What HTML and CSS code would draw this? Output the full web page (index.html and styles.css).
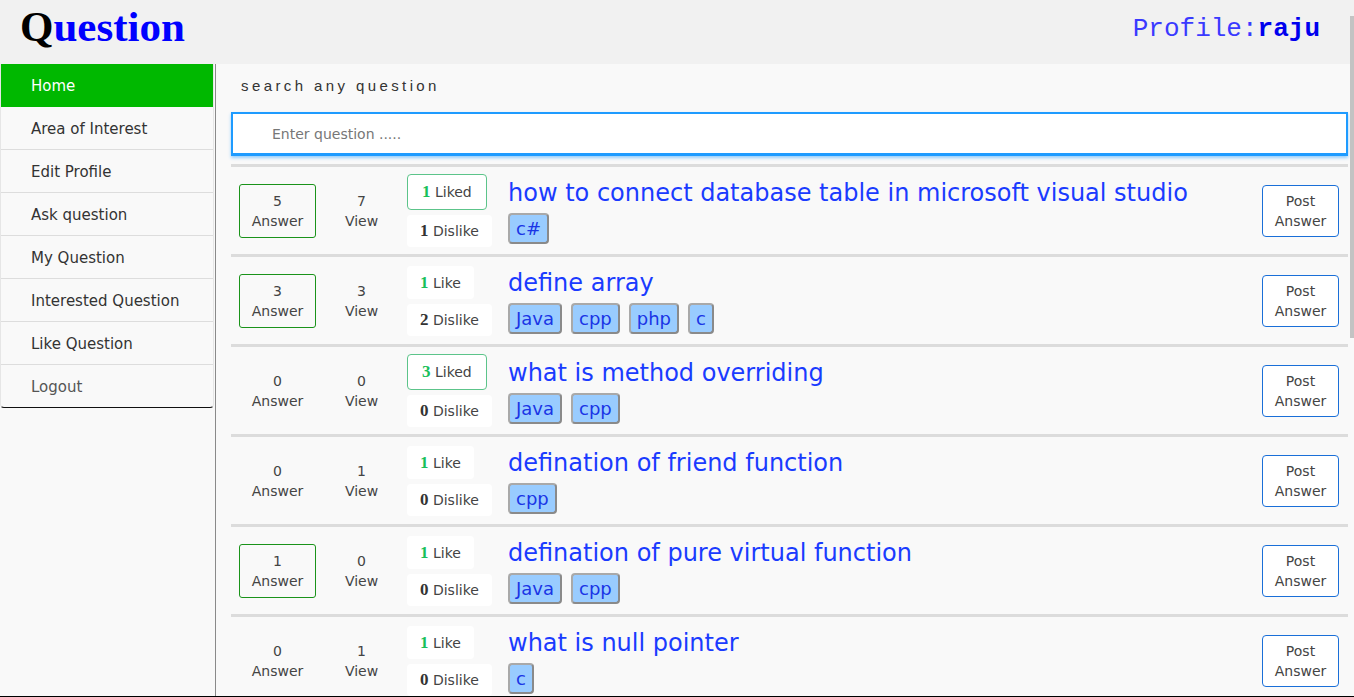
FILE: index.html
```html
<!DOCTYPE html>
<html>
<head>
<meta charset="utf-8">
<title>Question</title>
<link rel="stylesheet" href="styles.css">
</head>
<body>
<div class="page">
  <header class="topbar">
    <div class="logo"><span class="logo-q">Q</span>uestion</div>
    <div class="profile">Profile:<b>raju</b></div>
  </header>
  <div class="layout">
    <aside class="sidebar">
      <ul class="menu">
        <li class="active">Home</li>
        <li>Area of Interest</li>
        <li>Edit Profile</li>
        <li>Ask question</li>
        <li>My Question</li>
        <li>Interested Question</li>
        <li>Like Question</li>
        <li class="logout">Logout</li>
      </ul>
    </aside>
    <main class="content">
      <div class="search-label">search any question</div>
      <input class="search" type="text" placeholder="Enter question .....">
      <div class="list">
        <div class="row">
          <div class="answers has"><span>5</span><span>Answer</span></div>
          <div class="views"><span>7</span><span>View</span></div>
          <div class="votes">
            <div class="vote liked"><b class="num green">1</b> Liked</div>
            <div class="vote"><b class="num">1</b> Dislike</div>
          </div>
          <div class="q">
            <div class="title">how to connect database table in microsoft visual studio</div>
            <div class="tags"><span class="tag">c#</span></div>
          </div>
          <div class="post">Post<br>Answer</div>
        </div>
        <div class="row">
          <div class="answers has"><span>3</span><span>Answer</span></div>
          <div class="views"><span>3</span><span>View</span></div>
          <div class="votes">
            <div class="vote"><b class="num green">1</b> Like</div>
            <div class="vote"><b class="num">2</b> Dislike</div>
          </div>
          <div class="q">
            <div class="title">define array</div>
            <div class="tags"><span class="tag">Java</span><span class="tag">cpp</span><span class="tag">php</span><span class="tag">c</span></div>
          </div>
          <div class="post">Post<br>Answer</div>
        </div>
        <div class="row">
          <div class="answers"><span>0</span><span>Answer</span></div>
          <div class="views"><span>0</span><span>View</span></div>
          <div class="votes">
            <div class="vote liked"><b class="num green">3</b> Liked</div>
            <div class="vote"><b class="num">0</b> Dislike</div>
          </div>
          <div class="q">
            <div class="title">what is method overriding</div>
            <div class="tags"><span class="tag">Java</span><span class="tag">cpp</span></div>
          </div>
          <div class="post">Post<br>Answer</div>
        </div>
        <div class="row">
          <div class="answers"><span>0</span><span>Answer</span></div>
          <div class="views"><span>1</span><span>View</span></div>
          <div class="votes">
            <div class="vote"><b class="num green">1</b> Like</div>
            <div class="vote"><b class="num">0</b> Dislike</div>
          </div>
          <div class="q">
            <div class="title">defination of friend function</div>
            <div class="tags"><span class="tag">cpp</span></div>
          </div>
          <div class="post">Post<br>Answer</div>
        </div>
        <div class="row">
          <div class="answers has"><span>1</span><span>Answer</span></div>
          <div class="views"><span>0</span><span>View</span></div>
          <div class="votes">
            <div class="vote"><b class="num green">1</b> Like</div>
            <div class="vote"><b class="num">0</b> Dislike</div>
          </div>
          <div class="q">
            <div class="title">defination of pure virtual function</div>
            <div class="tags"><span class="tag">Java</span><span class="tag">cpp</span></div>
          </div>
          <div class="post">Post<br>Answer</div>
        </div>
        <div class="row">
          <div class="answers"><span>0</span><span>Answer</span></div>
          <div class="views"><span>1</span><span>View</span></div>
          <div class="votes">
            <div class="vote"><b class="num green">1</b> Like</div>
            <div class="vote"><b class="num">0</b> Dislike</div>
          </div>
          <div class="q">
            <div class="title">what is null pointer</div>
            <div class="tags"><span class="tag">c</span></div>
          </div>
          <div class="post">Post<br>Answer</div>
        </div>
      </div>
    </main>
  </div>
  <div class="scroll-thumb"></div>
</div>
</body>
</html>
```

FILE: styles.css
```css
* { box-sizing: border-box; }
html, body {
  margin: 0;
  padding: 0;
  height: 697px;
  overflow: hidden;
  background: #f9f9f9;
  font-family: "DejaVu Sans", Verdana, sans-serif;
}
.page {
  height: 697px;
  display: flex;
  flex-direction: column;
  border-bottom: 1px solid #000;
}
.topbar {
  height: 64px;
  flex: none;
  background: #f1f1f1;
  display: flex;
  align-items: flex-start;
  justify-content: space-between;
  padding: 0 34px 0 20px;
}
.logo {
  font-family: "Liberation Serif", "Times New Roman", serif;
  font-weight: bold;
  font-size: 43px;
  line-height: 54px;
  color: #0000ff;
}
.logo-q { color: #000; }
.profile {
  font-family: "Liberation Mono", "Courier New", monospace;
  font-size: 26px;
  line-height: 30px;
  margin-top: 14px;
  color: #3a3aff;
}
.profile b { color: #0000ee; }
.layout {
  flex: 1;
  display: flex;
  min-height: 0;
}
.sidebar {
  width: 216px;
  flex: none;
  border-right: 1px solid #8a8a8a;
  background: #f9f9f9;
  padding-right: 1px;
}
.menu {
  list-style: none;
  margin: 0;
  padding: 0;
  border-bottom: 1px solid #111;
  border-left: 1px solid #e6e6e6;
  border-right: 1px solid #e6e6e6;
  border-radius: 0 0 4px 4px;
  overflow: hidden;
}
.menu li {
  height: 43px;
  line-height: 44px;
  padding-left: 30px;
  font-size: 15px;
  color: #333;
  border-bottom: 1px solid #dddddd;
}
.menu li:last-child { border-bottom: none; height: 42px; }
.menu li.active {
  background: #00b800;
  color: #fff;
  border-bottom: none;
}
.menu li.logout { color: #555; }
.content {
  flex: 1;
  min-width: 0;
  background: #f9f9f9;
  padding: 13px 5px 0 15px;
  overflow: hidden;
}
.search-label {
  font-family: "Liberation Sans", Arial, sans-serif;
  font-size: 15px;
  line-height: 18px;
  letter-spacing: 3.4px;
  color: #333;
  padding-left: 10px;
}
.search {
  display: block;
  width: 1117px;
  height: 44px;
  margin-top: 17px;
  border: 2px solid #1e9bff;
  border-bottom-width: 3px;
  box-shadow: 0 2px 3px rgba(30, 155, 255, 0.45);
  background: #fff;
  padding: 0 0 0 39px;
  font-family: "DejaVu Sans", Verdana, sans-serif;
  font-size: 14px;
  color: #333;
  outline: none;
}
.search::placeholder { color: #777; }
.list {
  width: 1117px;
  margin-top: 8px;
}
.row {
  height: 90px;
  border-top: 3px solid #dcdcdc;
  display: flex;
  align-items: center;
  padding: 0 9px 0 8px;
  font-size: 14px;
  color: #444;
}
.answers, .views {
  width: 77px;
  flex: none;
  display: flex;
  flex-direction: column;
  align-items: center;
  justify-content: center;
  line-height: 20px;
}
.answers {
  height: 54px;
  border: 1px solid transparent;
  border-radius: 3px;
  margin-right: 7px;
}
.answers.has { border-color: #1a931a; }
.views { margin-right: 7px; }
.votes {
  width: 85px;
  flex: none;
  margin-right: 16px;
  display: flex;
  flex-direction: column;
  align-items: flex-start;
  gap: 5px;
}
.vote {
  height: 32px;
  line-height: 32px;
  padding: 0 13px;
  background: #fff;
  border-radius: 4px;
  white-space: nowrap;
}
.vote:first-child { height: 33px; line-height: 33px; }
.vote.liked {
  height: 36px;
  line-height: 34px;
  border: 1px solid #5cc48a;
  padding: 0 14px;
}
.num {
  font-family: "Liberation Serif", "Times New Roman", serif;
  font-size: 17px;
  color: #333;
}
.num.green { color: #19c05a; }
.q {
  flex: 1;
  min-width: 0;
  display: flex;
  flex-direction: column;
  align-items: flex-start;
}
.title {
  font-size: 24px;
  line-height: 30px;
  color: #1a3bff;
  white-space: nowrap;
}
.tags {
  display: flex;
  gap: 9px;
  margin-top: 5px;
}
.tag {
  display: block;
  height: 31px;
  line-height: 27px;
  padding: 0 6px;
  background: #99ccff;
  border: 2px solid #a9a9a9;
  border-right-color: #8a8a8a;
  border-bottom-color: #8a8a8a;
  border-radius: 4px;
  font-size: 18px;
  color: #1a35e6;
}
.post {
  width: 77px;
  height: 52px;
  flex: none;
  border: 1px solid #1a6fd8;
  border-radius: 4px;
  text-align: center;
  line-height: 20px;
  padding-top: 5px;
  color: #444;
  background: #fff;
}
.scroll-thumb {
  position: fixed;
  top: 16px;
  right: 0;
  width: 4px;
  height: 322px;
  background: #c3c3c3;
}
```
